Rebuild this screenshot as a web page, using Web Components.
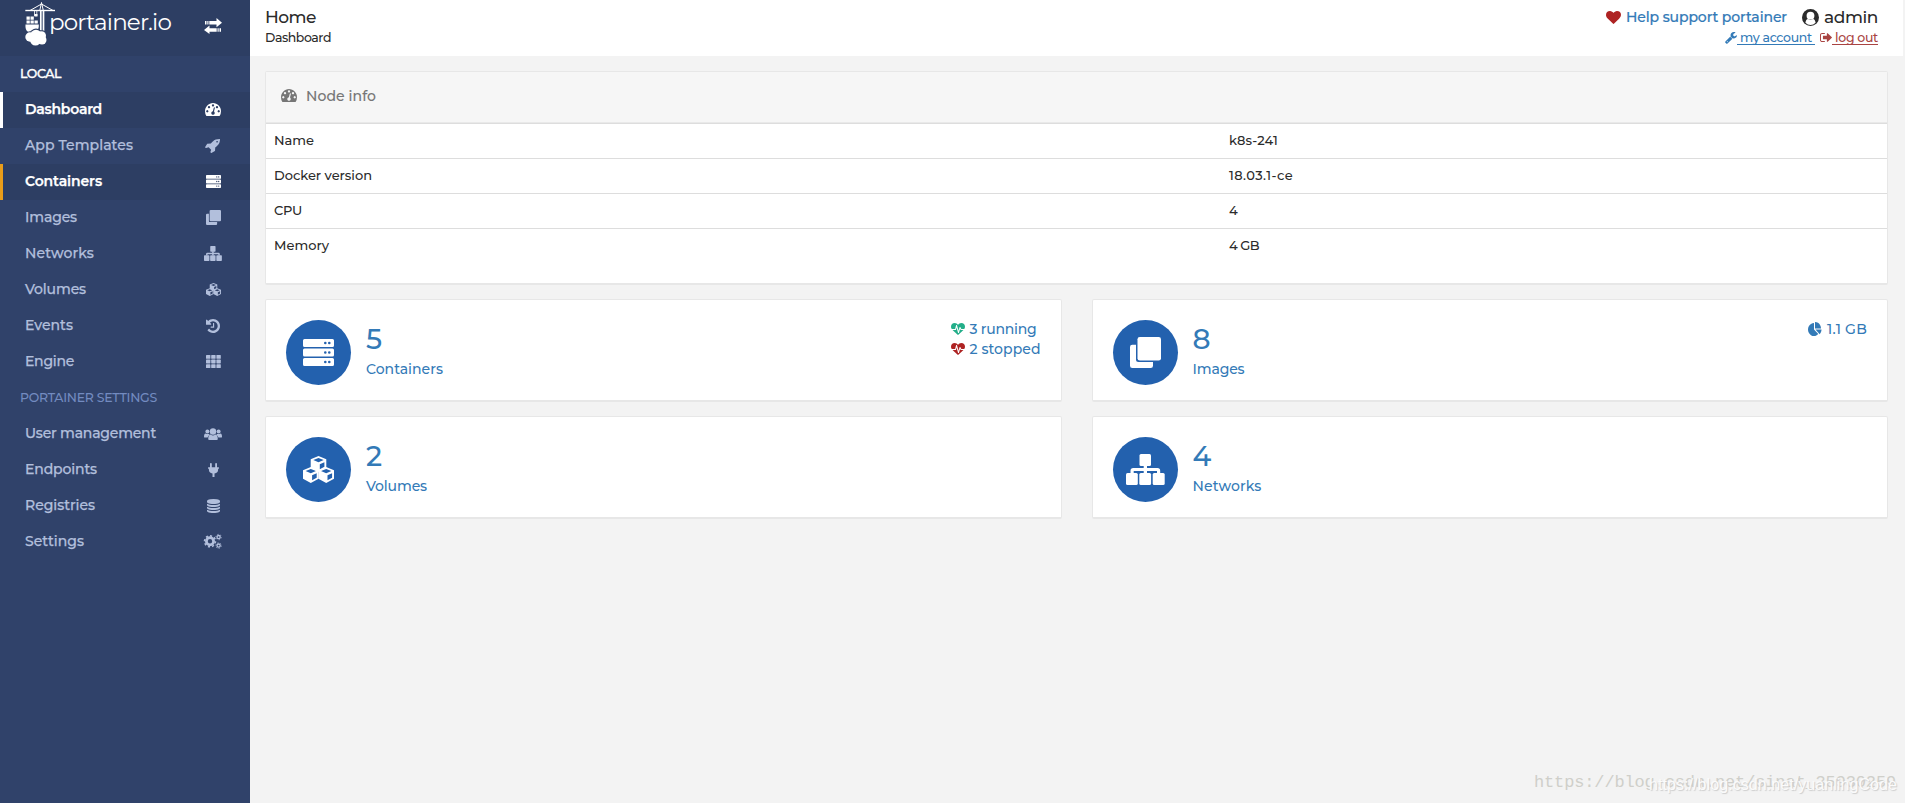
<!DOCTYPE html>
<html lang="en">
<head>
<meta charset="utf-8">
<title>Portainer</title>
<style>
    html, body {
        margin: 0;
        height: 100%;
    }

    body {
        background: #f3f3f3;
        overflow: hidden;
        font-family: Montserrat, Lato, "Noto Sans", sans-serif;
        font-size: 14px;
        font-weight: 500;
        color: #2b2b2b;
    }
</style>
</head>
<body>
<portainer-app></portainer-app>

<script>
const F = 'fill-rule="evenodd"';

// one isometric cube, origin at the top vertex
const cube = (x, y) => `<path transform="translate(${x} ${y})" ${F} d="M0 0l7.800 3.200v8.600l-7.800 4.200-7.800-4.200v-8.600zM-5.200 4l5.200 2.200 5.200-2.200-5.200-2.100zM1.300 8.200v5l4.600-2.500v-4.500z"/>`;

const gear = (x, y, r, w, teeth) => `
    <circle cx="${x}" cy="${y}" r="${r}" fill="none" stroke="currentColor" stroke-width="${w}"/>
    <circle cx="${x}" cy="${y}" r="${r + w / 2 + 0.5}" fill="none" stroke="currentColor" stroke-width="${w * 0.55}" pathLength="${teeth * 2}" stroke-dasharray="1"/>`;

const ICONS = {
    heart: ['0 0 1792 1792', '<path d="M896 1664q-26 0-44-18l-624-602q-10-8-27.500-26t-55.500-65.500-68-97.500-53.500-121-23.500-138q0-220 127-344t351-124q62 0 126.500 21.500t120 58 95.500 68.500 76 68q36-36 76-68t95.500-68.500 120-58 126.500-21.500q224 0 351 124t127 344q0 221-229 450l-623 600q-18 18-44 18z"/>'],
    heartbeat: ['0 0 1792 1792', '<path d="M1280 1024h305q-5 6-10 10.500t-9 7.500l-3 4-623 600q-18 18-44 18t-44-18l-624-602q-5-2-21-20h369q22 0 39.500-13.500t22.500-34.500l70-281 190 667q6 20 23 33t39 13q21 0 38-13t23-33l146-485 56 112q18 35 57 35zm512-428q0 145-103 300h-369l-111-221q-8-17-25.500-27t-36.500-8q-45 5-56 46l-129 430-196-686q-6-20-23.500-33t-39.500-13-39 13.500-22 34.500l-116 464h-423q-103-155-103-300 0-220 127-344t351-124q62 0 126.500 21.500t120 58 95.500 68.500 76 68q36-36 76-68t95.500-68.500 120-58 126.500-21.500q224 0 351 124t127 344z"/>'],
    tachometer: ['0 256 1792 1408', '<path d="M384 1152q0-53-37.500-90.500t-90.500-37.500-90.500 37.500-37.500 90.500 37.500 90.500 90.500 37.500 90.500-37.500 37.500-90.500zm192-448q0-53-37.500-90.500t-90.500-37.500-90.500 37.500-37.500 90.500 37.500 90.500 90.500 37.500 90.500-37.500 37.500-90.500zm428 481l101-382q6-26-7.500-48.500t-38.500-29.500-48 6.500-30 39.500l-101 382q-60 5-107 43.500t-63 98.500q-20 77 20 146t117 89 146-20 89-117q16-60-6-117t-72-91zm660-33q0-53-37.500-90.500t-90.500-37.500-90.500 37.500-37.500 90.500 37.500 90.500 90.500 37.500 90.500-37.500 37.500-90.500zm-640-640q0-53-37.500-90.500t-90.500-37.500-90.500 37.500-37.500 90.500 37.500 90.500 90.500 37.500 90.500-37.500 37.500-90.500zm448 192q0-53-37.500-90.500t-90.500-37.500-90.500 37.500-37.500 90.500 37.500 90.500 90.500 37.500 90.500-37.500 37.500-90.500zm320 448q0 261-141 483-19 29-54 29h-1402q-35 0-54-29-141-221-141-483 0-182 71-348t191-286 286-191 348-71 348 71 286 191 191 286 71 348z"/>'],
    rocket: ['128 128 1536 1632', '<path d="M1440 448q0-40-28-68t-68-28-68 28-28 68 28 68 68 28 68-28 28-68zm224-288q0 249-75.500 430.500t-253.500 360.500q-81 80-195 176l-20 379q-2 16-16 26l-384 224q-7 4-16 4-12 0-23-9l-64-64q-13-14-8-32l85-276-281-281-276 85q-3 1-9 1-14 0-23-9l-64-64q-17-19-5-39l224-384q10-14 26-16l379-20q96-114 176-195 188-187 358-258t431-71q14 0 24 9.500t10 22.500z"/>'],
    server: ['0 0 31 27', [0, 9.5, 19].map(y => `<path ${F} transform="translate(0 ${y})" d="M1.500 0h28q1.500 0 1.500 1.500v5q0 1.500-1.500 1.500h-28q-1.500 0-1.500-1.500v-5q0-1.500 1.500-1.500zM21 4a1.300 1.300 0 0 0 2.600 0a1.300 1.300 0 0 0-2.600 0zM25 4a1.300 1.300 0 0 0 2.600 0a1.300 1.300 0 0 0-2.600 0z"/>`).join('')],
    clone: ['0 0 31 31', '<rect x="7.500" width="23.500" height="23.500" rx="2.300"/><path d="M2.300 7.800h3.700v14.700q0 2.500 2.500 2.500h14.500v3.700q0 2.300-2.300 2.300h-18.400q-2.300 0-2.300-2.300v-18.600q0-2.300 2.300-2.300z"/>'],
    sitemap: ['0 0 39 31', '<rect x="13.500" width="11.500" height="12" rx="1.500"/><rect y="19" width="11.800" height="12" rx="1.500"/><rect x="13.300" y="19" width="11.800" height="12" rx="1.500"/><rect x="26.700" y="19" width="12" height="12" rx="1.500"/><path d="M17.700 11h3.300v3h10.500q2.700 0 2.700 2.700v3h-3.200v-2.700h-10v2.700h-3.300v-2.700h-10v2.700h-3.200v-3q0-2.700 2.700-2.700h10.500z"/>'],
    cubes: ['0 0 31 27', cube(15.5, 0) + cube(7.8, 11) + cube(23.2, 11)],
    history: ['128 128 1536 1536', '<path d="M1664 896q0 156-61 298t-164 245-245 164-298 61q-172 0-327-72.500t-264-204.500q-7-10-6.500-22.500t8.500-20.500l137-138q10-9 25-9 16 2 23 12 73 95 179 147t225 52q104 0 198.500-40.500t163.500-109.500 109.500-163.500 40.500-198.500-40.500-198.500-109.500-163.500-163.500-109.500-198.500-40.500q-98 0-188 35.500t-160 101.500l137 138q31 30 14 69-17 40-59 40h-448q-26 0-45-19t-19-45v-448q0-42 40-59 39-17 69 14l130 129q107-101 244.500-156.500t284.500-55.500q156 0 298 61t245 164 164 245 61 298zm-640-288v448q0 14-9 23t-23 9h-320q-14 0-23-9t-9-23v-64q0-14 9-23t23-9h224v-352q0-14 9-23t23-9h64q14 0 23 9t9 23z"/>'],
    th: ['0 0 15 13', [0, 4.6, 9.2].map(y => [0, 5.2, 10.4].map(x => `<rect x="${x}" y="${y}" width="4.400" height="3.800" rx=".6"/>`).join('')).join('')],
    users: ['0 0 18 12', '<circle cx="9" cy="3.500" r="3.200"/><path d="M4.200 11.200q0-4.700 2.600-4.700q1 .9 2.200.9t2.200-.9q2.600 0 2.600 4.700q0 .8-1.200.8h-7.200q-1.200 0-1.200-.8z"/><circle cx="3.400" cy="3.400" r="2"/><circle cx="14.600" cy="3.400" r="2"/><path d="M0 9q0-3.500 1.500-3.500q2 1 3.600.3q0 .8.500 1.200q-1.500.5-2 2.500h-2.400q-1.200 0-1.200-.5zM18 9q0-3.500-1.500-3.500q-2 1-3.600.3q0 .8-.5 1.200q1.500.5 2 2.500h2.400q1.200 0 1.200-.5z"/>'],
    plug: ['0 0 11 14', '<path d="M2 .8a.9.900 0 0 1 1.800 0v3.400h3.400v-3.400a.9.900 0 0 1 1.800 0v3.400h1.500q.5 0 .5.500v.6q0 .5-.5.500h-.4v1q0 3.200-3.600 3.800v3.400h-2v-3.400q-3.600-.6-3.600-3.800v-1h-.4q-.5 0-.5-.5v-.6q0-.5.500-.5h1.500z"/>'],
    database: ['128 0 1536 1792', '<path d="M896 768q237 0 443-43t325-127v170q0 69-103 128t-280 93.500-385 34.500-385-34.500-280-93.500-103-128v-170q119 84 325 127t443 43zm0 768q237 0 443-43t325-127v170q0 69-103 128t-280 93.500-385 34.500-385-34.500-280-93.500-103-128v-170q119 84 325 127t443 43zm0-384q237 0 443-43t325-127v170q0 69-103 128t-280 93.500-385 34.500-385-34.500-280-93.500-103-128v-170q119 84 325 127t443 43zm0-1152q208 0 385 34.500t280 93.500 103 128v128q0 69-103 128t-280 93.500-385 34.500-385-34.500-280-93.500-103-128v-128q0-69 103-128t280-93.500 385-34.500z"/>'],
    cogs: ['0 0 18 15', gear(6, 7.3, 3.6, 2.8, 8) + gear(14.6, 3.1, 1.6, 1.3, 6) + gear(14.6, 11.6, 1.6, 1.3, 6)],
    wrench: ['64 128 1664 1664', '<path d="M448 1472q0-26-19-45t-45-19-45 19-19 45 19 45 45 19 45-19 19-45zm644-420l-682 682q-37 37-90 37-52 0-91-37l-106-108q-38-36-38-90 0-53 38-91l681-681q39 98 114.500 173.500t173.500 114.500zm634-435q0 39-23 106-47 134-164.500 217.500t-258.500 83.500q-185 0-316.500-131.500t-131.500-316.500 131.500-316.500 316.500-131.500q58 0 121.500 16.500t107.500 46.500q16 11 16 28t-16 28l-293 169v224l193 107q5-3 79-48.500t135.500-81 70.500-35.500q15 0 23.500 10t8.500 25z"/>'],
    signout: ['64 256 1568 1280', '<path d="M704 1440q0 4 1 20t.5 26.500-3 23.500-10 19.500-20.500 6.500h-320q-119 0-203.500-84.500t-84.500-203.500v-704q0-119 84.500-203.500t203.500-84.500h320q13 0 22.500 9.500t9.500 22.500q0 4 1 20t.5 26.500-3 23.500-10 19.500-20.500 6.500h-320q-66 0-113 47t-47 113v704q0 66 47 113t113 47h312l11.500 1 11.500 3 8 5.500 7 9 2 13.500zm928-544q0 26-19 45l-544 544q-19 19-45 19t-45-19-19-45v-288h-448q-26 0-45-19t-19-45v-384q0-26 19-45t45-19h448v-288q0-26 19-45t45-19 45 19l544 544q19 19 19 45z"/>'],
    user: ['0 0 17 17', '<circle cx="8.500" cy="8.500" r="8.500"/><circle cx="8.500" cy="6.700" r="3.900" fill="#fff"/><path d="M3.400 13.700q.5-3.400 2.600-3.700q2.500 1.600 5 0q2.100.3 2.600 3.700q-2.200 2.200-5.100 2.200t-5.100-2.200z" fill="#fff"/>'],
    pie: ['0 0 1792 1664', '<path d="M768 890l546 546q-106 108-247.500 168t-298.500 60q-209 0-385.500-103t-279.500-279.500-103-385.500 103-385.500 279.500-279.500 385.500-103v762zm187 6h773q0 157-60 298.500t-168 247.500zm709-128h-768v-768q209 0 385.500 103t279.500 279.500 103 385.500z"/>'],
    transfer: ['0 0 18 16', '<path d="M1 3h1.500v3.500h-1.500zM3.300 3h1.200v3.500h-1.200zM5.300 3h7.200v-3l5.500 4.700-5.500 4.500v-2.700h-7.200zM17 10.200h-1.500v3.500h1.500zM14.700 10.200h-1.200v3.500h1.200zM12.700 10.200h-7.200v-2.600l-5.500 4.300 5.500 4.100v-2.300h7.200z"/>'],
    crane: ['0 0 32 45', `
        <g fill="none" stroke="currentColor">
            <path d="M.3 8.500h29.700" stroke-width="1.400"/>
            <path d="M5 8.500l11.500-6.500 11.500 6.500M14.800 8.500l1.700-8 1.800 8" stroke-width="1"/>
            <path d="M15.800 9v20M18.500 9v22" stroke-width="1.700"/>
            <path d="M9.500 9v5M11.800 9v5" stroke-width=".8"/>
        </g>
        <path d="M1.500 14.500h3.300v3.300h-3.300zM5.500 14.500h3.300v3.300h-3.300zM9.500 12h3v2.600h-3zM1.500 18.500h3.300v3h-3.300zM5.500 18.500h3.300v3h-3.300zM9.500 18.500h3.300v3h-3.300zM.5 22.500h13.300q.3 5-2.800 7.200h-8q-3-1.600-2.500-7.200z"/>
        <g fill="#2d3e63"><circle cx="5.500" cy="34.500" r="5.300"/><circle cx="11" cy="32.500" r="6"/><circle cx="17" cy="33" r="4.800"/></g>
        <circle cx="5" cy="35" r="4.700"/><circle cx="11" cy="33.500" r="5.800"/><circle cx="16.500" cy="33.700" r="4.500"/><circle cx="17" cy="38" r="4.500"/><circle cx="10.500" cy="38" r="5.500"/>`],
};

const base = (css, html) => `<style>:host { display: block; box-sizing: border-box; } ${css}</style>${html}`;

class PtIcon extends HTMLElement {
    connectedCallback() {
        const [box, body] = ICONS[this.getAttribute('name')];
        this.attachShadow({ mode: 'open' }).innerHTML = base(`
            :host {
                display: inline-block;
                flex: none;
                width: ${this.getAttribute('w')}px;
                height: ${this.getAttribute('h')}px;
                -webkit-text-stroke: 0;
            }
            svg { display: block; width: 100%; height: 100%; overflow: visible; fill: currentColor; }`,
            `<svg viewBox="${box}" preserveAspectRatio="none">${body}</svg>`);
    }
}

// Text tracked out (or in) to a given width, so labels keep their measure in a fallback font
class PtText extends HTMLElement {
    connectedCallback() {
        this.attachShadow({ mode: 'open' }).innerHTML = base(`
            :host { display: inline-block; white-space: pre; }`,
            '<span><slot></slot></span>');
        const target = Number(this.getAttribute('w'));
        const span = this.shadowRoot.querySelector('span');
        const gap = (target - span.getBoundingClientRect().width) / this.textContent.length;
        span.style.letterSpacing = `${gap.toFixed(3)}px`;
    }
}

class SidebarItem extends HTMLElement {
    connectedCallback() {
        const [icon, w, h] = this.getAttribute('icon').split(' ');
        this.attachShadow({ mode: 'open' }).innerHTML = base(`
            :host {
                display: flex;
                align-items: center;
                height: 36px;
                padding-left: 22px;
                border-left: 3px solid transparent;
                color: #b2bfdc;
                -webkit-text-stroke: 0.25px;
            }
            :host([active]) { background: #2d3e63; color: #fff; border-left-color: #fff; font-weight: 600; }
            :host([hover]) { border-left-color: #e99d1a; }
            .label { flex: 1; padding-bottom: 3px; }
            .icon { width: 73px; padding: 0 1px 1px 0; box-sizing: border-box; display: flex; justify-content: center; align-items: center; }`,
            `<div class="label"><slot></slot></div>
             <div class="icon"><pt-icon name="${icon}" w="${w}" h="${h}"></pt-icon></div>`);
    }
}

class AppSidebar extends HTMLElement {
    connectedCallback() {
        this.attachShadow({ mode: 'open' }).innerHTML = base(`
            :host { width: 250px; background: #30426a; }
            .brand {
                display: flex;
                align-items: flex-start;
                height: 56px;
                box-sizing: border-box;
                padding: 2px 28px 0 25px;
                background: #2d3e63;
                color: #fff;
            }
            .brand .name { font-size: 23px; line-height: 28px; margin: 6px 0 0 -8px; flex: 1; font-weight: 400; }
            .brand .toggle { margin-top: 16px; }
            .title { height: 36px; line-height: 35px; padding-left: 20px; font-size: 12.500px; color: #fff; -webkit-text-stroke: 0.4px; }
            .title.muted { color: #738bc0; -webkit-text-stroke: 0; }`, `
            <div class="brand">
                <pt-icon name="crane" w="32" h="45"></pt-icon>
                <div class="name"><pt-text w="122">portainer.io</pt-text></div>
                <pt-icon class="toggle" name="transfer" w="18" h="16"></pt-icon>
            </div>
            <div class="title"><pt-text w="41">LOCAL</pt-text></div>
            <sidebar-item active icon="tachometer 16 13"><pt-text w="77">Dashboard</pt-text></sidebar-item>
            <sidebar-item icon="rocket 14 14"><pt-text w="108">App Templates</pt-text></sidebar-item>
            <sidebar-item active hover icon="server 15 13"><pt-text w="77">Containers</pt-text></sidebar-item>
            <sidebar-item icon="clone 15 15"><pt-text w="52">Images</pt-text></sidebar-item>
            <sidebar-item icon="sitemap 18 15"><pt-text w="69">Networks</pt-text></sidebar-item>
            <sidebar-item icon="cubes 15 13"><pt-text w="61">Volumes</pt-text></sidebar-item>
            <sidebar-item icon="history 14 14"><pt-text w="48">Events</pt-text></sidebar-item>
            <sidebar-item icon="th 15 13"><pt-text w="49">Engine</pt-text></sidebar-item>
            <div class="title muted"><pt-text w="137">PORTAINER SETTINGS</pt-text></div>
            <sidebar-item icon="users 18 12"><pt-text w="131">User management</pt-text></sidebar-item>
            <sidebar-item icon="plug 11 14"><pt-text w="72">Endpoints</pt-text></sidebar-item>
            <sidebar-item icon="database 13 14"><pt-text w="70">Registries</pt-text></sidebar-item>
            <sidebar-item icon="cogs 18 15"><pt-text w="59">Settings</pt-text></sidebar-item>`);
    }
}

class AppHeader extends HTMLElement {
    connectedCallback() {
        this.attachShadow({ mode: 'open' }).innerHTML = base(`
            :host {
                display: flex;
                justify-content: space-between;
                height: 56px;
                margin-right: 2px;
                padding: 5px 25px 0 15px;
                background: #fff;
            }
            .line { display: flex; align-items: center; height: 24px; }
            .small { height: 17px; font-size: 12.500px; justify-content: flex-end; }
            .small.left { justify-content: flex-start; }
            .big { font-size: 17px; }
            .help { color: #337ab7; margin: 0 15px 0 5px; -webkit-text-stroke: 0.2px; }
            .admin { margin-left: 5px; }
            .heart { color: #ae2323; }
            a { display: flex; align-items: center; color: #337ab7; }
            a pt-text { text-decoration: underline; text-underline-offset: 2px; }
            a.out { color: #a94442; margin-left: 5px; }`, `
            <div>
                <div class="line big"><pt-text w="51">Home</pt-text></div>
                <div class="line small left"><pt-text w="66">Dashboard</pt-text></div>
            </div>
            <div>
                <div class="line">
                    <pt-icon class="heart" name="heart" w="15" h="15"></pt-icon>
                    <span class="help"><pt-text w="161">Help support portainer</pt-text></span>
                    <pt-icon name="user" w="17" h="17"></pt-icon>
                    <span class="admin big"><pt-text w="54">admin</pt-text></span>
                </div>
                <div class="line small">
                    <a><pt-icon name="wrench" w="12" h="12"></pt-icon><pt-text w="78"> my account </pt-text></a>
                    <a class="out"><pt-icon name="signout" w="12" h="9"></pt-icon><pt-text w="46"> log out</pt-text></a>
                </div>
            </div>`);
    }
}

class NodeInfo extends HTMLElement {
    connectedCallback() {
        const rows = [['Name', 40, 'k8s-241', 49], ['Docker version', 98, '18.03.1-ce', 64], ['CPU', 28, '4', 8], ['Memory', 55, '4 GB', 30]];
        this.attachShadow({ mode: 'open' }).innerHTML = base(`
            :host {
                height: 214px;
                background: #fff;
                border: 1px solid #e7e7e7;
                border-bottom-width: 2px;
                border-radius: 2px;
            }
            .head {
                display: flex;
                align-items: center;
                gap: 9px;
                height: 51px;
                box-sizing: border-box;
                padding: 0 15px 3px;
                background: #f6f6f6;
                border-bottom: 1px solid #e9e9e9;
                color: #767676;
                -webkit-text-stroke: 0.1px;
            }
            .row {
                display: grid;
                grid-template-columns: 955px 1fr;
                align-items: center;
                height: 35px;
                padding: 0 8px 3px;
                box-sizing: border-box;
                border-top: 1px solid #ddd;
                font-size: 13px;
            }`, `
            <div class="head"><pt-icon name="tachometer" w="16" h="13"></pt-icon><pt-text w="70">Node info</pt-text></div>
            ${rows.map(([k, kw, v, vw]) => `<div class="row"><span><pt-text w="${kw}">${k}</pt-text></span><span><pt-text w="${vw}">${v}</pt-text></span></div>`).join('')}`);
    }
}

class StatCard extends HTMLElement {
    connectedCallback() {
        const [icon, w, h] = this.getAttribute('icon').split(' ');
        this.attachShadow({ mode: 'open' }).innerHTML = base(`
            :host {
                display: flex;
                height: 103px;
                padding: 20px;
                background: #fff;
                border: 1px solid #e7e7e7;
                border-bottom-width: 2px;
                border-radius: 2px;
                color: #337ab7;
            }
            .circle {
                display: flex;
                align-items: center;
                justify-content: center;
                width: 65px;
                height: 65px;
                border-radius: 50%;
                background: #2361ae;
                color: #fff;
                margin-right: 15px;
            }
            .info { flex: 1; }
            .value { font-size: 28px; line-height: 38px; }
            .label { line-height: 22px; }`, `
            <div class="circle"><pt-icon name="${icon}" w="${w}" h="${h}"></pt-icon></div>
            <div class="info">
                <div class="value">${this.getAttribute('value')}</div>
                <div class="label"><slot></slot></div>
            </div>
            <slot name="extra"></slot>`);
    }
}

class StatLine extends HTMLElement {
    connectedCallback() {
        this.attachShadow({ mode: 'open' }).innerHTML = base(`
            :host { display: flex; align-items: center; gap: 5px; height: 20px; padding-bottom: 2px; }
            pt-icon { color: ${this.getAttribute('color')}; }`,
            `<pt-icon name="${this.getAttribute('icon')}" w="14" h="14"></pt-icon><slot></slot>`);
    }
}

// Two text marks laid over the bottom right corner
class PageMark extends HTMLElement {
    connectedCallback() {
        this.attachShadow({ mode: 'open' }).innerHTML = base(`
            :host { position: absolute; right: 9px; bottom: 6px; width: 362px; height: 28px; font-weight: 400; }
            .a, .b { position: absolute; line-height: 28px; }
            .a { left: 0; top: 0; font-family: "Liberation Mono", monospace; font-size: 17px; color: #cfcfca; }
            .b { right: -1px; top: 2px; font-family: "Liberation Sans", sans-serif; font-size: 16px; color: #fbfbfb; text-shadow: 1px 1px 1px #ccc; }`, `
            <div class="a"><pt-text w="362">https://blog.csdn.net/sinat_35930259</pt-text></div>
            <div class="b"><pt-text w="248">https://blog.csdn.net/yuanlingCode</pt-text></div>`);
    }
}

class PortainerApp extends HTMLElement {
    connectedCallback() {
        this.attachShadow({ mode: 'open' }).innerHTML = base(`
            :host { display: flex; height: 100vh; position: relative; }
            app-sidebar { flex: none; }
            main { flex: 1; }
            .content { padding: 15px 17px 0 15px; }
            .cards { display: grid; grid-template-columns: 1fr 1fr; gap: 14px 30px; margin-top: 14px; }
            .extra { width: 90px; }
            .extra.size { width: 59px; }`, `
            <app-sidebar></app-sidebar>
            <main>
                <app-header></app-header>
                <div class="content">
                    <node-info></node-info>
                    <div class="cards">
                        <stat-card icon="server 31 27" value="5">
                            <pt-text w="77">Containers</pt-text>
                            <div slot="extra" class="extra">
                                <stat-line icon="heartbeat" color="#23ae89"><pt-text w="67">3 running</pt-text></stat-line>
                                <stat-line icon="heartbeat" color="#ae2323"><pt-text w="71">2 stopped</pt-text></stat-line>
                            </div>
                        </stat-card>
                        <stat-card icon="clone 31 31" value="8">
                            <pt-text w="52">Images</pt-text>
                            <div slot="extra" class="extra size">
                                <stat-line icon="pie" color="#337ab7"><pt-text w="40">1.1 GB</pt-text></stat-line>
                            </div>
                        </stat-card>
                        <stat-card icon="cubes 31 27" value="2"><pt-text w="61">Volumes</pt-text></stat-card>
                        <stat-card icon="sitemap 39 31" value="4"><pt-text w="69">Networks</pt-text></stat-card>
                    </div>
                </div>
            </main>
            <page-mark></page-mark>`);
    }
}

customElements.define('pt-icon', PtIcon);
customElements.define('pt-text', PtText);
customElements.define('sidebar-item', SidebarItem);
customElements.define('app-sidebar', AppSidebar);
customElements.define('app-header', AppHeader);
customElements.define('node-info', NodeInfo);
customElements.define('stat-card', StatCard);
customElements.define('stat-line', StatLine);
customElements.define('page-mark', PageMark);
customElements.define('portainer-app', PortainerApp);
</script>
</body>
</html>
